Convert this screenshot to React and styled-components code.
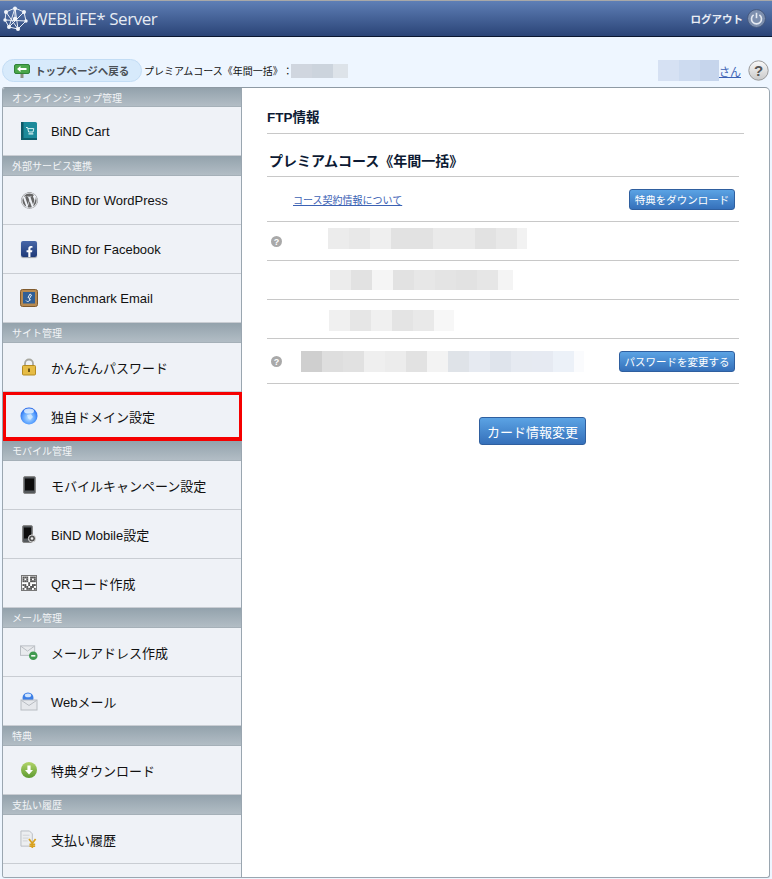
import styled, { createGlobalStyle } from "styled-components";
import { FaWordpress, FaFacebookF } from "react-icons/fa";

const GlobalStyle = createGlobalStyle`
  html, body {
    margin: 0;
    background: #eef6ff;
  }
  body {
    font-family: "Liberation Sans", "Noto Sans CJK JP", sans-serif;
    color: #111;
    text-spacing-trim: space-all;
  }
  a {
    color: #3c62b4;
  }
`;

const Page = styled.div`
  width: 772px;
  height: 879px;
  overflow: hidden;
`;

const TopBar = styled.header`
  height: 37px;
  box-sizing: border-box;
  border-top: 1px solid #a8a8a8;
  border-bottom: 1px solid #0b1730;
  background: linear-gradient(#5f7fb6, #2a4477);
  display: flex;
  align-items: center;
  justify-content: space-between;
  padding: 0 6px 0 3px;
`;

const Brand = styled.div`
  display: flex;
  align-items: center;
  gap: 4px;
  color: #e6ebf3;
  font-family: "Open Sans", sans-serif;
  font-size: 17px;
  line-height: 20px;
  letter-spacing: -0.45px;
`;

const Logout = styled.div`
  display: flex;
  align-items: center;
  gap: 4px;
  color: #e9edf4;
  font-size: 10.5px;
  font-weight: 700;
`;

const Toolbar = styled.div`
  height: 50px;
  box-sizing: border-box;
  display: flex;
  align-items: flex-end;
  justify-content: space-between;
  padding: 0 3px 5px 2px;
`;

const ToolGroup = styled.div`
  display: flex;
  align-items: center;
  height: 23px;
`;

const BackPill = styled.a`
  width: 140px;
  height: 23px;
  box-sizing: border-box;
  display: flex;
  align-items: center;
  gap: 5px;
  padding-left: 11px;
  background: #d7eafb;
  border: 1px solid #c3ddf5;
  border-radius: 12px;
  color: #4a4f55;
  font-size: 10.5px;
  font-weight: 700;
  text-decoration: none;
  white-space: nowrap;
`;

const CourseLabel = styled.span`
  margin-left: 2px;
  margin-right: -2px;
  font-size: 10px;
  white-space: nowrap;
`;

const Mosaic = styled.div`
  display: flex;
  height: ${(p) => p.$h}px;
  margin-left: ${(p) => p.$indent || 0}px;
  margin-bottom: ${(p) => -2 * (p.$offset || 0)}px;
`;

const Cell = styled.div`
  width: ${(p) => p.$w || 21}px;
  background: ${(p) => p.$c};
`;

const UserLink = styled.a`
  font-size: 11px;
`;

const Panel = styled.div`
  margin: 0 2px;
  height: 791px;
  box-sizing: border-box;
  display: flex;
  background: #fff;
  border: 1px solid #9aa6b0;
  border-top-color: #8e9aa4;
  border-radius: 3px 5px 3px 3px;
  overflow: hidden;
`;

const Sidebar = styled.nav`
  width: 239px;
  box-sizing: border-box;
  flex: none;
  background: #eff2f7;
  border-right: 1px solid #9aa6b0;
`;

const SectionHead = styled.div`
  height: ${(p) => (p.$first ? 19 : 20)}px;
  box-sizing: border-box;
  padding-left: 9px;
  display: flex;
  align-items: center;
  background: linear-gradient(#93a2ac, #b2bdc5);
  border-bottom: 1px solid #a5b0b8;
  color: #f2f4f6;
  font-size: 10px;
  white-space: nowrap;
`;

const MenuItem = styled.a`
  height: 49px;
  box-sizing: border-box;
  display: flex;
  align-items: center;
  gap: 13px;
  padding-left: 17px;
  margin-right: ${(p) => (p.$active ? -1 : 0)}px;
  border-bottom: 1px solid ${(p) => (p.$active ? "#f50000" : "#c9cdd3")};
  color: #111;
  font-size: 13px;
  white-space: nowrap;
  box-shadow: ${(p) => (p.$active ? "inset 0 0 0 3px #f50000" : "none")};
`;

const IconSlot = styled.span`
  width: 18px;
  height: 18px;
  flex: none;
  display: flex;
  align-items: center;
  justify-content: center;
`;

const Main = styled.main`
  flex: 1;
  padding-left: 25px;
`;

const PageTitle = styled.h1`
  width: 477px;
  height: 46px;
  box-sizing: border-box;
  margin: 0;
  padding-top: 21px;
  border-bottom: 1px solid #c8c8c8;
  color: #0d1a33;
  font-size: 13.5px;
  font-weight: 700;
  line-height: 18px;
`;

const CourseTitle = styled.h2`
  width: 472px;
  height: 43px;
  box-sizing: border-box;
  margin: 0;
  padding: 18px 0 0 2px;
  border-bottom: 1px solid #c8c8c8;
  color: #0d1a33;
  font-size: 14px;
  font-weight: 700;
  line-height: 18px;
  white-space: nowrap;
`;

const Row = styled.div`
  width: 472px;
  height: ${(p) => p.$h}px;
  box-sizing: border-box;
  display: flex;
  align-items: center;
  padding: 0 4px;
  border-bottom: 1px solid #c8c8c8;
`;

const RowLink = styled.a`
  margin-left: 22px;
  font-size: 10px;
`;

const BlueButton = styled.button`
  box-sizing: border-box;
  height: ${(p) => p.$h || 21}px;
  width: ${(p) => p.$w}px;
  padding: 0;
  flex: none;
  border: 1px solid #2f5f9f;
  border-radius: 3px;
  background: linear-gradient(#5ba3e4, #3570ba);
  color: #fff;
  font-family: inherit;
  font-size: ${(p) => p.$size || 10.5}px;
  white-space: nowrap;
`;

const PushRight = styled.div`
  margin-left: auto;
`;

const CardAction = styled.div`
  margin: 33px 0 0 212px;
`;

const PowerIcon = () => (
  <svg width="19" height="19" viewBox="0 0 19 19">
    <circle cx="9.5" cy="9.5" r="9" fill="#7d8fae" stroke="#45597f" />
    <path d="M6.6 5.8a5 5 0 1 0 5.8 0" fill="none" stroke="#e4e9f1" strokeWidth="1.6" />
    <path d="M9.5 3.8v5.4" stroke="#e4e9f1" strokeWidth="1.6" />
  </svg>
);

const LogoIcon = () => (
  <svg width="25" height="25" viewBox="0 0 25 25">
    <g stroke="#e8edf5" strokeWidth="1" fill="none">
      <path d="M3 6L12 2L21 6L23 15L15 23L6 21L2 14Z" />
      <path d="M3 6L15 23M21 6L6 21M12 2L12 13M2 14L23 15M12 2L6 21M12 2L15 23" />
    </g>
    <g fill="#f2f5fa">
      <circle cx="3" cy="6" r="2" />
      <circle cx="12" cy="2.5" r="2" />
      <circle cx="21" cy="6" r="2" />
      <circle cx="23" cy="15" r="1.7" />
      <circle cx="15" cy="23" r="2" />
      <circle cx="6" cy="21" r="2" />
      <circle cx="2" cy="14" r="1.7" />
      <circle cx="12" cy="13" r="2.2" />
    </g>
  </svg>
);

const BackIcon = () => (
  <svg width="16" height="14" viewBox="0 0 16 14">
    <rect x="6.500" y="9" width="3" height="5" fill="#8b8f7e" />
    <rect x="0.500" y="0.500" width="15" height="9" rx="1.500" fill="#4aa64a" stroke="#2f8238" />
    <path d="M3 5l3.500-3v2h6v2h-6v2z" fill="#fff" />
  </svg>
);

const HelpBig = () => (
  <svg width="21" height="21" viewBox="0 0 21 21">
    <defs>
      <linearGradient id="hb" x1="0" y1="0" x2="0" y2="1">
        <stop offset="0" stopColor="#fafafa" />
        <stop offset="1" stopColor="#c9c9c9" />
      </linearGradient>
    </defs>
    <circle cx="10.5" cy="10.5" r="9.7" fill="url(#hb)" stroke="#9a9a9a" />
    <text x="10.5" y="15.5" textAnchor="middle" fontSize="15" fontWeight="700" fontFamily="Liberation Sans" fill="#555">?</text>
  </svg>
);

const HelpSmall = () => (
  <svg width="11" height="11" viewBox="0 0 11 11">
    <circle cx="5.5" cy="5.5" r="5.5" fill="#a9a9a9" />
    <text x="5.5" y="8.8" textAnchor="middle" fontSize="9" fontWeight="700" fontFamily="Liberation Sans" fill="#fff">?</text>
  </svg>
);

const CartIcon = () => (
  <svg width="18" height="20" viewBox="0 0 18 20">
    <rect x="1.5" y="1" width="15.5" height="18" rx="1.5" fill="#1c8a9a" />
    <rect x="1" y="1" width="2.5" height="18" fill="#0f5a68" />
    <rect x="1.5" y="17" width="15.5" height="2" fill="#0d5f6d" />
    <path d="M6 6.5h1.6l1 4.5h4.4l.8-3.4H8" fill="none" stroke="#d9f2f2" strokeWidth="1" />
    <path d="M8.5 12.800h4.800" stroke="#d9f2f2" strokeWidth="1.2" />
  </svg>
);

const Square = styled.span`
  width: 16px;
  height: 16px;
  display: flex;
  align-items: flex-end;
  justify-content: center;
  border-radius: 2px;
  background: linear-gradient(#4767a8, #1e3a78);
  box-shadow: 0 1px 1px #9aa0a8;
`;

const FacebookIcon = () => (
  <Square>
    <FaFacebookF size={11} color="#fff" />
  </Square>
);

const BenchmarkIcon = () => (
  <svg width="18" height="18" viewBox="0 0 18 18">
    <rect x="0.5" y="0.5" width="17" height="17" rx="2" fill="#b78a50" stroke="#7f5a2e" />
    <rect x="3" y="3" width="12" height="11.5" fill="#2f5f96" />
    <path d="M6 11.5a2 2 0 1 0 2-3l2-3.5 1.5 1-2 3.5a2 2 0 0 1 .5 2" fill="none" stroke="#e8eef5" strokeWidth="1" />
  </svg>
);

const LockIcon = () => (
  <svg width="16" height="18" viewBox="0 0 16 18">
    <path d="M4 8V5.5a4 4 0 0 1 8 0V8" fill="none" stroke="#a8a8a0" strokeWidth="1.8" />
    <rect x="1.5" y="7.5" width="13" height="9.5" rx="1" fill="#e6bc45" stroke="#b58b20" />
    <rect x="7" y="10.5" width="2" height="3.5" fill="#6d5412" />
  </svg>
);

const GlobeIcon = () => (
  <svg width="18" height="18" viewBox="0 0 18 18">
    <defs>
      <radialGradient id="gl" cx="0.5" cy="0.6" r="0.6">
        <stop offset="0" stopColor="#bfe2ff" />
        <stop offset="0.6" stopColor="#5aa2ff" />
        <stop offset="1" stopColor="#1f62e6" />
      </radialGradient>
    </defs>
    <circle cx="9" cy="9" r="8.5" fill="url(#gl)" />
    <ellipse cx="9" cy="4" rx="5" ry="2.6" fill="#eef7ff" opacity="0.8" />
    <path d="M7 8l4-1 2 3-3 3-2-2z" fill="#e0f1ff" opacity="0.7" />
  </svg>
);

const PhoneIcon = () => (
  <svg width="13" height="18" viewBox="0 0 13 18">
    <rect x="0.5" y="0.5" width="12" height="17" rx="1.5" fill="#55595c" stroke="#888" />
    <rect x="2" y="2.5" width="9" height="12" fill="#0c0c0c" />
  </svg>
);

const PhoneGearIcon = () => (
  <svg width="14" height="18" viewBox="0 0 14 18">
    <rect x="0.5" y="0.5" width="10" height="17" rx="1.5" fill="#55595c" stroke="#888" />
    <rect x="2" y="2.5" width="7" height="11" fill="#0c0c0c" />
    <circle cx="10" cy="13.5" r="3.6" fill="#555" stroke="#ddd" />
    <circle cx="10" cy="13.5" r="1.3" fill="#eee" />
  </svg>
);

const qrCells = [
  "1110111", "1010101", "1110111", "0001000", "1101011", "0110110", "1011101",
];

const QrIcon = () => (
  <svg width="16" height="16" viewBox="0 0 16 16">
    <rect x="0.5" y="0.5" width="15" height="15" fill="#fff" stroke="#777" />
    {qrCells.map((row, y) =>
      row.split("").map((on, x) =>
        on === "1" ? <rect key={`${x}-${y}`} x={1.5 + x * 1.9} y={1.5 + y * 1.9} width="1.9" height="1.9" fill="#555" /> : null
      )
    )}
  </svg>
);

const MailPlusIcon = () => (
  <svg width="19" height="17" viewBox="0 0 19 17">
    <rect x="0.5" y="1.5" width="15" height="10" fill="#e9ebee" stroke="#b8bcc2" />
    <path d="M1 2l7 5 7-5" fill="none" stroke="#b8bcc2" />
    <circle cx="14" cy="12" r="4.5" fill="#3f9a4f" />
    <path d="M11.8 12h4.4" stroke="#fff" strokeWidth="1.6" />
  </svg>
);

const WebMailIcon = () => (
  <svg width="18" height="19" viewBox="0 0 18 19">
    <circle cx="8" cy="6" r="5.5" fill="#3d7fe6" />
    <ellipse cx="8" cy="3.4" rx="3.2" ry="1.8" fill="#cfe4ff" />
    <rect x="1" y="8" width="16" height="10" fill="#e6e8ec" stroke="#b8bcc2" />
    <path d="M1.5 8.5l7.5 5 7.5-5" fill="none" stroke="#b8bcc2" />
  </svg>
);

const DownIcon = () => (
  <svg width="16" height="16" viewBox="0 0 16 16">
    <defs>
      <linearGradient id="dn" x1="0" y1="0" x2="0" y2="1">
        <stop offset="0" stopColor="#b2d56a" />
        <stop offset="1" stopColor="#5d9a30" />
      </linearGradient>
    </defs>
    <circle cx="8" cy="8" r="8" fill="url(#dn)" />
    <path d="M6.4 3.500h3.200v4.500h2.400L8 12.500 4 8h2.400z" fill="#fff" />
  </svg>
);

const YenDocIcon = () => (
  <svg width="19" height="19" viewBox="0 0 19 19">
    <path d="M1 .5h9l3 3v13H1z" fill="#eceef0" stroke="#b8bcc2" />
    <path d="M3 5h7M3 8h6M3 11h5" stroke="#cfd2d6" />
    <path d="M9.500 9l3.500 4.500L16.500 9M13 13.500V18.500M10 14.500h6M10 16.500h6" fill="none" stroke="#d9a21f" strokeWidth="1.8" />
  </svg>
);

const menu = [
  {
    head: "オンラインショップ管理",
    items: [{ label: "BiND Cart", icon: <CartIcon /> }],
  },
  {
    head: "外部サービス連携",
    items: [
      { label: "BiND for WordPress", icon: <FaWordpress size={17} color="#666" /> },
      { label: "BiND for Facebook", icon: <FacebookIcon /> },
      { label: "Benchmark Email", icon: <BenchmarkIcon /> },
    ],
  },
  {
    head: "サイト管理",
    items: [
      { label: "かんたんパスワード", icon: <LockIcon /> },
      { label: "独自ドメイン設定", icon: <GlobeIcon />, active: true },
    ],
  },
  {
    head: "モバイル管理",
    items: [
      { label: "モバイルキャンペーン設定", icon: <PhoneIcon /> },
      { label: "BiND Mobile設定", icon: <PhoneGearIcon /> },
      { label: "QRコード作成", icon: <QrIcon /> },
    ],
  },
  {
    head: "メール管理",
    items: [
      { label: "メールアドレス作成", icon: <MailPlusIcon /> },
      { label: "Webメール", icon: <WebMailIcon /> },
    ],
  },
  {
    head: "特典",
    items: [{ label: "特典ダウンロード", icon: <DownIcon /> }],
  },
  {
    head: "支払い履歴",
    items: [{ label: "支払い履歴", icon: <YenDocIcon /> }],
  },
];

const blurs = {
  plan: [["#d0d6df", 21], ["#ccd4dd", 21], ["#dde3e9", 15]],
  user: [["#d6e1f3"], ["#cddbf0"], ["#c6d5ec", 19]],
  one: [["#ececec"], ["#e8e8e8"], ["#efefef"], ["#e2e2e2"], ["#e2e2e2"], ["#eaeaea"], ["#eaeaea"], ["#e2e2e2"], ["#e8e8e8"], ["#f2f2f2", 10]],
  two: [["#ececec"], ["#e2e2e2"], ["#f5f5f5"], ["#e2e2e2"], ["#e7e7e7"], ["#e4e4e4"], ["#e2e2e2"], ["#e6e6e6"], ["#f4f4f4", 15]],
  three: [["#f0f0f0"], ["#e6e6e6"], ["#f0f0f0"], ["#e4e4e4"], ["#e9e9e9"], ["#f7f7f7", 20]],
  four: [["#cfcfcf"], ["#dedede"], ["#e1e1e1"], ["#efefef"], ["#ececec"], ["#e2e2e2"], ["#f3f3f3"], ["#dfe3e8"], ["#e6eaf1"], ["#dfe4ec"], ["#e6eaf1"], ["#e6eaf2"], ["#ecf1f8"], ["#fafbfd", 10]],
};

const Blur = ({ cells, h, indent, offset }) => (
  <Mosaic $h={h} $indent={indent} $offset={offset}>
    {cells.map(([c, w], i) => (
      <Cell key={i} $c={c} $w={w} />
    ))}
  </Mosaic>
);

export default function App() {
  return (
    <Page>
      <GlobalStyle />
      <TopBar>
        <Brand>
          <LogoIcon />
          WEBLiFE* Server
        </Brand>
        <Logout>
          ログアウト
          <PowerIcon />
        </Logout>
      </TopBar>
      <Toolbar>
        <ToolGroup>
          <BackPill>
            <BackIcon />
            トップページへ戻る
          </BackPill>
          <CourseLabel>プレミアムコース《年間一括》：</CourseLabel>
          <Blur cells={blurs.plan} h={14} />
        </ToolGroup>
        <ToolGroup>
          <Blur cells={blurs.user} h={21} />
          <UserLink href="#">さん</UserLink>
          <Mosaic $h={21} $indent={7}>
            <HelpBig />
          </Mosaic>
        </ToolGroup>
      </Toolbar>
      <Panel>
        <Sidebar>
          {menu.map((section, i) => (
            <div key={section.head}>
              <SectionHead $first={i === 0}>{section.head}</SectionHead>
              {section.items.map((item) => (
                <MenuItem key={item.label} $active={item.active}>
                  <IconSlot>{item.icon}</IconSlot>
                  {item.label}
                </MenuItem>
              ))}
            </div>
          ))}
        </Sidebar>
        <Main>
          <PageTitle>FTP情報</PageTitle>
          <CourseTitle>プレミアムコース《年間一括》</CourseTitle>
          <Row $h={45}>
            <RowLink href="#">コース契約情報について</RowLink>
            <PushRight>
              <BlueButton $w={106}>特典をダウンロード</BlueButton>
            </PushRight>
          </Row>
          <Row $h={39}>
            <HelpSmall />
            <Blur cells={blurs.one} h={21} indent={46} offset={-3} />
          </Row>
          <Row $h={39}>
            <Blur cells={blurs.two} h={20} indent={59} />
          </Row>
          <Row $h={39}>
            <Blur cells={blurs.three} h={21} indent={58} offset={1} />
          </Row>
          <Row $h={45}>
            <HelpSmall />
            <Blur cells={blurs.four} h={21} indent={19} />
            <PushRight>
              <BlueButton $w={116}>パスワードを変更する</BlueButton>
            </PushRight>
          </Row>
          <CardAction>
            <BlueButton $w={107} $h={28} $size={13}>カード情報変更</BlueButton>
          </CardAction>
        </Main>
      </Panel>
    </Page>
  );
}
